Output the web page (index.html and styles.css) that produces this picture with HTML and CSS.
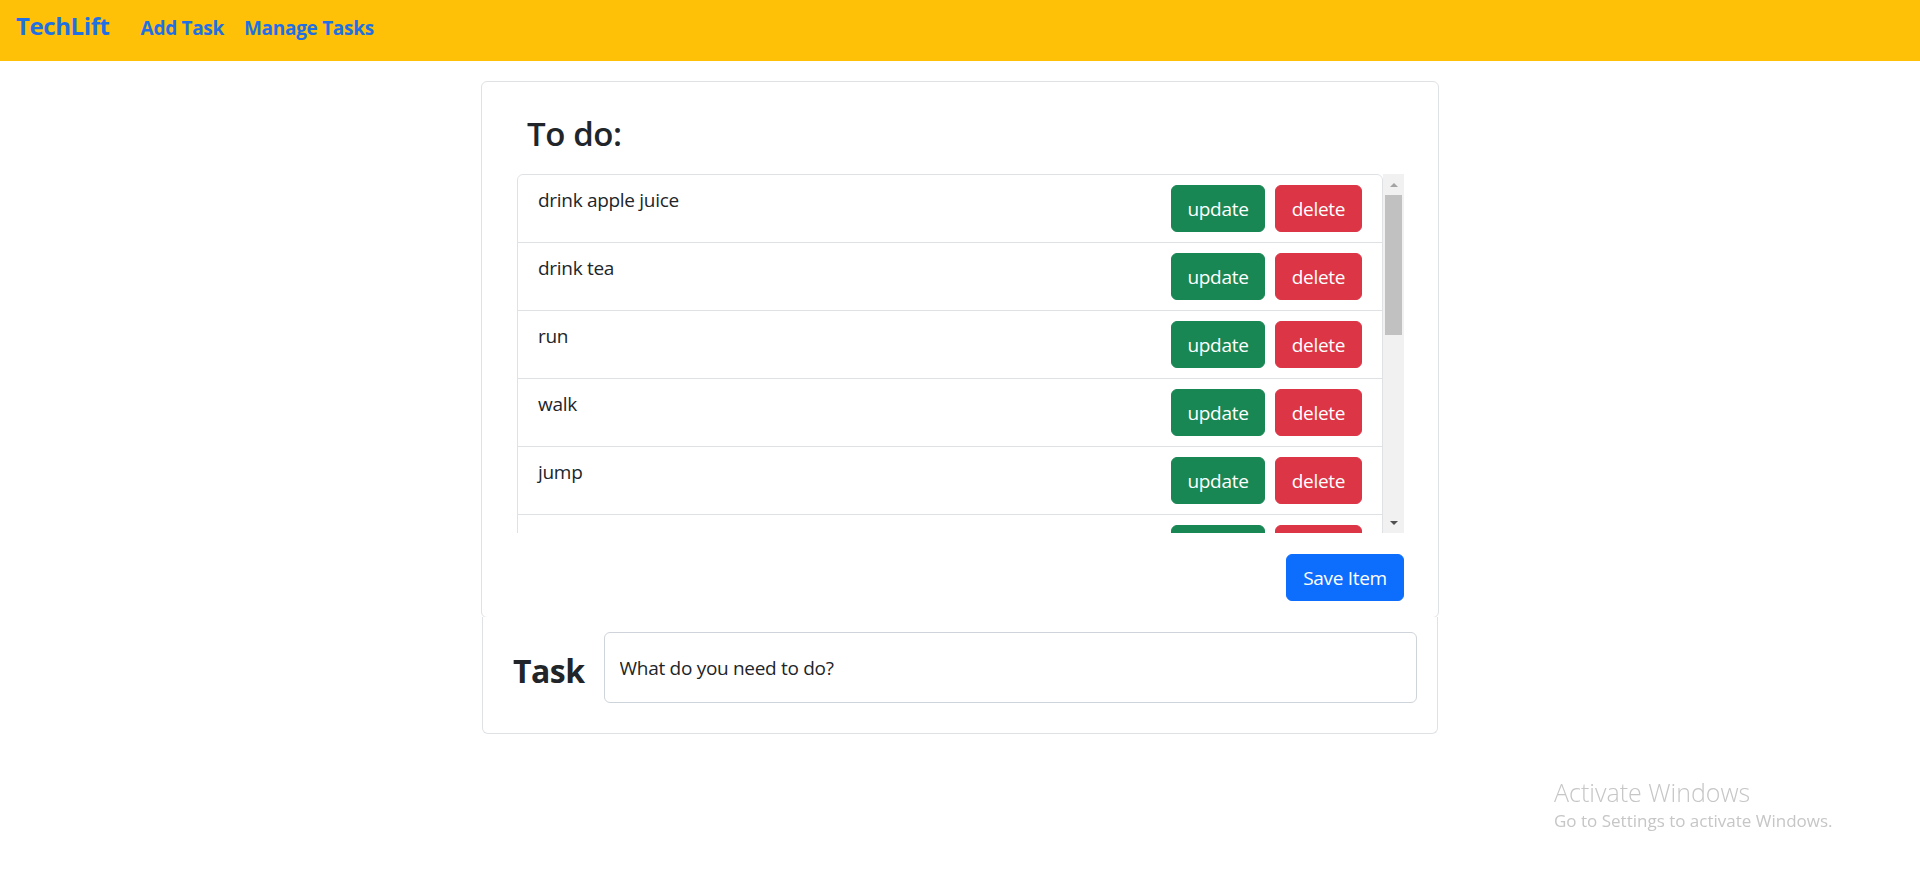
FILE: index.html
```html
<!DOCTYPE html>
<html lang="en">
<head>
<meta charset="utf-8">
<title>TechLift</title>
<link rel="stylesheet" href="styles.css">
</head>
<body>
<nav class="navbar">
  <a class="brand" href="#">TechLift</a>
  <a class="nav-link" href="#">Add Task</a>
  <a class="nav-link" href="#">Manage Tasks</a>
</nav>

<main class="main">
  <section class="card todo-card">
    <h3 class="todo-title">To do:</h3>
    <div class="scroll-box">
      <div class="list-viewport">
        <ul class="list-group">
          <li class="list-item"><span class="item-text">drink apple juice</span><span class="item-actions"><button class="btn btn-update">update</button><button class="btn btn-delete">delete</button></span></li>
          <li class="list-item"><span class="item-text">drink tea</span><span class="item-actions"><button class="btn btn-update">update</button><button class="btn btn-delete">delete</button></span></li>
          <li class="list-item"><span class="item-text">run</span><span class="item-actions"><button class="btn btn-update">update</button><button class="btn btn-delete">delete</button></span></li>
          <li class="list-item"><span class="item-text">walk</span><span class="item-actions"><button class="btn btn-update">update</button><button class="btn btn-delete">delete</button></span></li>
          <li class="list-item"><span class="item-text">jump</span><span class="item-actions"><button class="btn btn-update">update</button><button class="btn btn-delete">delete</button></span></li>
          <li class="list-item"><span class="item-text">sweep the hall</span><span class="item-actions"><button class="btn btn-update">update</button><button class="btn btn-delete">delete</button></span></li>
          <li class="list-item"><span class="item-text">read a book</span><span class="item-actions"><button class="btn btn-update">update</button><button class="btn btn-delete">delete</button></span></li>
        </ul>
      </div>
      <div class="scrollbar">
        <span class="sb-btn"><span class="arrow-up"></span></span>
        <span class="sb-thumb"></span>
        <span class="sb-fill"></span>
        <span class="sb-btn"><span class="arrow-down"></span></span>
      </div>
    </div>
    <div class="save-row">
      <button class="btn btn-save">Save Item</button>
    </div>
  </section>

  <section class="card task-card">
    <label class="task-label" for="task">Task</label>
    <input class="task-input" id="task" type="text" value="What do you need to do?">
  </section>
</main>

<div class="watermark">
  <div class="wm-title">Activate Windows</div>
  <div class="wm-sub">Go to Settings to activate Windows.</div>
</div>
</body>
</html>
```

FILE: styles.css
```css
* { box-sizing: border-box; }

body {
  margin: 0;
  font-family: "Open Sans", "Noto Sans", sans-serif;
  font-size: 19px;
  color: #212529;
  background: #fff;
}

.navbar {
  height: 61px;
  background: #ffc107;
  display: flex;
  align-items: baseline;
  padding: 7px 0 0 16px;
}

.brand {
  font-size: 24px;
  font-weight: 700;
  line-height: 37px;
  color: #1f6fe5;
  text-decoration: none;
  letter-spacing: -0.4px;
  margin-right: 21px;
}

.nav-link {
  font-size: 19px;
  font-weight: 700;
  line-height: 30px;
  color: #1f6fe5;
  text-decoration: none;
  padding: 0 10px;
  letter-spacing: -0.3px;
}

.main {
  width: 958px;
  margin: 20px auto 0;
  display: flex;
  flex-direction: column;
  align-items: center;
}

.card {
  background: #fff;
  border: 1px solid #dfe2e5;
  border-radius: 6px;
}

.todo-card {
  width: 958px;
  padding: 31px 34px 16px 35px;
}

.todo-title {
  margin: 0 0 19px;
  padding-left: 10px;
  font-size: 33px;
  font-weight: 600;
  line-height: 42px;
  letter-spacing: -0.4px;
}

.scroll-box {
  display: flex;
  height: 359px;
}

.list-viewport {
  flex: 1;
  overflow: hidden;
}

.list-group {
  list-style: none;
  margin: 0;
  padding: 0;
  border: 1px solid #dfe2e5;
  border-radius: 6px;
}

.list-item {
  display: flex;
  justify-content: space-between;
  align-items: flex-start;
  padding: 10px 20px 10px 20px;
  border-bottom: 1px solid #dfe2e5;
}

.item-text {
  line-height: 30px;
  letter-spacing: -0.3px;
}

.item-actions {
  display: flex;
  gap: 10px;
}

.btn {
  font-family: inherit;
  font-size: 19px;
  line-height: 30px;
  padding: 7.5px 0;
  border: 1px solid transparent;
  border-radius: 6px;
  color: #fff;
  text-align: center;
  letter-spacing: -0.3px;
}

.btn-update { width: 94px; background: #198754; border-color: #198754; }
.btn-delete { width: 87px; background: #dc3545; border-color: #dc3545; }
.btn-save { width: 118px; background: #0d6efd; border-color: #0d6efd; }

.scrollbar {
  width: 21px;
  background: #f1f1f1;
  display: flex;
  flex-direction: column;
  align-items: center;
}

.sb-btn {
  height: 21px;
  width: 100%;
  display: flex;
  align-items: center;
  justify-content: center;
}

.arrow-up {
  width: 0; height: 0;
  border-left: 4px solid transparent;
  border-right: 4px solid transparent;
  border-bottom: 4px solid #a3a3a3;
}

.arrow-down {
  width: 0; height: 0;
  border-left: 4px solid transparent;
  border-right: 4px solid transparent;
  border-top: 4px solid #505050;
}

.sb-thumb {
  width: 17px;
  height: 140px;
  background: #c1c1c1;
}

.sb-fill { flex: 1; }

.save-row {
  display: flex;
  justify-content: flex-end;
  margin-top: 21px;
}

.task-card {
  width: 956px;
  margin-top: -1px;
  border-top: none;
  border-top-left-radius: 0;
  border-top-right-radius: 0;
  display: flex;
  align-items: center;
  gap: 19px;
  padding: 15px 20px 30px 30px;
}

.task-label {
  font-size: 32px;
  font-weight: 700;
  line-height: 40px;
  letter-spacing: -0.5px;
  padding-top: 6px;
}

.task-input {
  flex: 1;
  height: 71px;
  border: 1px solid #ced4da;
  border-radius: 6px;
  padding: 0 15px;
  font-family: inherit;
  font-size: 19px;
  color: #212529;
  letter-spacing: -0.3px;
  outline: none;
}

.watermark {
  position: fixed;
  left: 1554px;
  top: 775px;
  color: #c6c6c6;
  pointer-events: none;
}

.wm-title {
  font-size: 25px;
  font-weight: 300;
  line-height: 34px;
}

.wm-sub {
  font-size: 17px;
  line-height: 24px;
}
```
